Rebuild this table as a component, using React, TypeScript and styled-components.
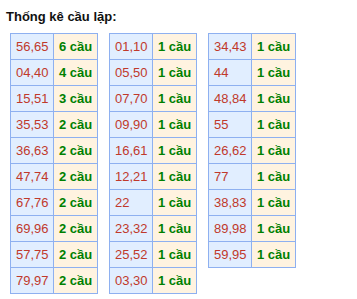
import React from 'react';
import styled, { createGlobalStyle } from 'styled-components';

const GlobalStyle = createGlobalStyle`
  body {
    margin: 0;
    background: #fff;
    font-family: "Liberation Sans", Arial, sans-serif;
  }
`;

const Wrapper = styled.div`
  padding: 9px 6px 0 6px;
`;

const Title = styled.div`
  font-size: 13px;
  font-weight: bold;
  line-height: 15px;
  color: #111;
  margin-bottom: 9px;
`;

const Tables = styled.div`
  display: flex;
  align-items: flex-start;
  gap: 11px;
  padding-left: 4px;
`;

const Table = styled.div`
  display: grid;
  grid-template-columns: 43px 44px;
  border-top: 1px solid #8eb0f0;
  border-left: 1px solid #8eb0f0;
`;

const Cell = styled.div<{ $kind: 'num' | 'count' }>`
  height: 25px;
  display: flex;
  align-items: center;
  padding-left: 5px;
  font-size: 13px;
  border-right: 1px solid #8eb0f0;
  border-bottom: 1px solid #8eb0f0;
  background: ${p => (p.$kind === 'num' ? '#e1eeff' : '#fff3e0')};
  color: ${p => (p.$kind === 'num' ? '#c0392b' : '#008000')};
  font-weight: ${p => (p.$kind === 'num' ? 'normal' : 'bold')};
`;

const columns: [string, string][][] = [
  [
    ['56,65', '6 cầu'],
    ['04,40', '4 cầu'],
    ['15,51', '3 cầu'],
    ['35,53', '2 cầu'],
    ['36,63', '2 cầu'],
    ['47,74', '2 cầu'],
    ['67,76', '2 cầu'],
    ['69,96', '2 cầu'],
    ['57,75', '2 cầu'],
    ['79,97', '2 cầu'],
  ],
  [
    ['01,10', '1 cầu'],
    ['05,50', '1 cầu'],
    ['07,70', '1 cầu'],
    ['09,90', '1 cầu'],
    ['16,61', '1 cầu'],
    ['12,21', '1 cầu'],
    ['22', '1 cầu'],
    ['23,32', '1 cầu'],
    ['25,52', '1 cầu'],
    ['03,30', '1 cầu'],
  ],
  [
    ['34,43', '1 cầu'],
    ['44', '1 cầu'],
    ['48,84', '1 cầu'],
    ['55', '1 cầu'],
    ['26,62', '1 cầu'],
    ['77', '1 cầu'],
    ['38,83', '1 cầu'],
    ['89,98', '1 cầu'],
    ['59,95', '1 cầu'],
  ],
];

const App: React.FC = () => (
  <>
    <GlobalStyle />
    <Wrapper>
      <Title>Thống kê cầu lặp:</Title>
      <Tables>
        {columns.map((rows, i) => (
          <Table key={i}>
            {rows.map(([num, count]) => (
              <React.Fragment key={num}>
                <Cell $kind="num">{num}</Cell>
                <Cell $kind="count">{count}</Cell>
              </React.Fragment>
            ))}
          </Table>
        ))}
      </Tables>
    </Wrapper>
  </>
);

export default App;
